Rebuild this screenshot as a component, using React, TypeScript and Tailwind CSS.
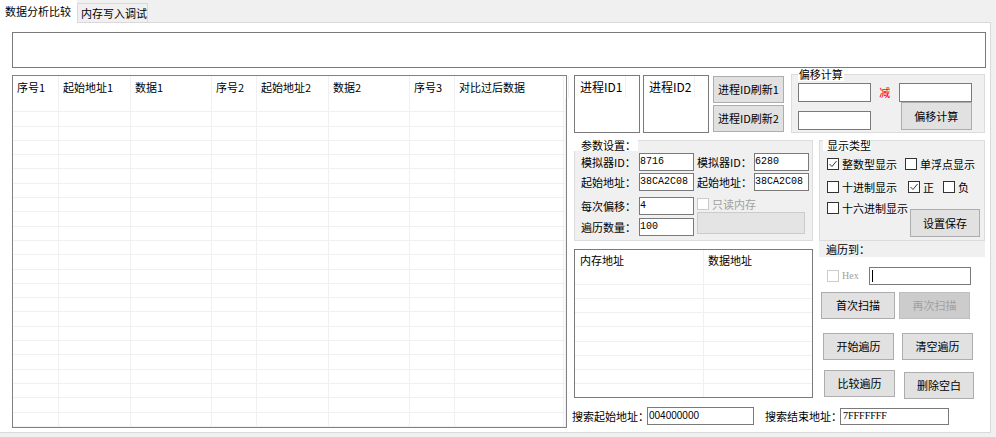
import React from "react";

const COLS = "grid grid-cols-[46px_72px_81px_45px_72px_81px_45px_109px_1fr]";
const HEADERS = ["序号1", "起始地址1", "数据1", "序号2", "起始地址2", "数据2", "序号3", "对比过后数据", ""];

function Btn({ label, className = "", disabled = false }: { label: string; className?: string; disabled?: boolean }) {
  return (
    <div
      className={`flex shrink-0 items-center justify-center border text-[11px] ${
        disabled ? "border-[#bfbfbf] bg-[#cccccc] text-[#a0a0a0]" : "border-[#adadad] bg-[#e1e1e1] text-black"
      } ${className}`}
    >
      {label}
    </div>
  );
}

function Check({ checked = false, disabled = false }: { checked?: boolean; disabled?: boolean }) {
  return (
    <span
      className={`flex h-[12px] w-[12px] shrink-0 items-center justify-center border bg-white ${
        disabled ? "border-[#cccccc]" : "border-[#333333]"
      }`}
    >
      {checked && (
        <svg width="10" height="10" viewBox="0 0 10 10">
          <path d="M1.5 5 L4 7.5 L8.5 2" fill="none" stroke="#333333" strokeWidth="1" />
        </svg>
      )}
    </span>
  );
}

function Field({ value = "", className = "" }: { value?: string; className?: string }) {
  return (
    <div className={`flex shrink-0 items-center overflow-hidden border border-[#7a7a7a] bg-white ${className}`}>{value}</div>
  );
}

function CheckItem({ label, checked = false, className = "" }: { label: string; checked?: boolean; className?: string }) {
  return (
    <div className={`flex h-[12px] items-center ${className}`}>
      <Check checked={checked} />
      <span className="ml-[3px] whitespace-nowrap">{label}</span>
    </div>
  );
}

// 进程ID 列表框
function IdBox({ title, className = "" }: { title: string; className?: string }) {
  return (
    <div className={`h-[58px] w-[66px] shrink-0 border border-[#7a7a7a] bg-white ${className}`}>
      <div className="flex h-[21px] w-[51px] items-center border-r border-[#f0f0f0] pl-[5px] text-[12px]">{title}</div>
    </div>
  );
}

const MONO = "font-['Liberation_Mono',monospace] text-[10px]";

export default function App() {
  return (
    <div className="h-[437px] w-[996px] overflow-hidden bg-[#f0f0f0] font-['Noto_Sans_CJK_SC',sans-serif] text-[11px] leading-none text-black">
      {/* 选项卡 */}
      <div className="flex h-[23px] items-end">
        <div className="flex h-[23px] w-[77px] items-center bg-white pl-[5px]">数据分析比较</div>
        <div className="flex h-[20px] w-[71px] items-center border border-[#d9d9d9] bg-[#f0f0f0] pl-[3px]">内存写入调试</div>
        <div className="h-[1px] w-[843px] bg-[#d9d9d9]" />
      </div>

      {/* 选项卡页面 */}
      <div className="h-[410px] w-[991px] border-r border-b border-[#d9d9d9] bg-white pl-[12px] pt-[9px]">
        <div className="h-[36px] w-[974px] border border-[#7a7a7a]" />

        <div className="flex">
          {/* 左侧比较列表 */}
          <div className="mt-[7px] h-[353px] w-[555px] shrink-0 border border-[#828282] bg-white">
            <div className={`${COLS} h-[22px]`}>
              {HEADERS.map((h, i) => (
                <div key={i} className="flex items-center border-r border-[#f0f0f0] pl-[4px]">
                  {h}
                </div>
              ))}
            </div>
            <div className="flex h-[329px] flex-col">
              {Array.from({ length: 23 }).map((_, r) => (
                <div key={r} className={`${COLS} flex-1 border-b border-[#f0f0f0]`}>
                  {HEADERS.map((_, c) => (
                    <div key={c} className="border-r border-[#f0f0f0]" />
                  ))}
                </div>
              ))}
            </div>
          </div>

          {/* 右侧面板 */}
          <div className="ml-[7px] flex w-[411px] flex-col">
            {/* 进程 + 偏移计算 */}
            <div className="flex h-[65px] items-start">
              <IdBox title="进程ID1" className="mt-[7px]" />
              <IdBox title="进程ID2" className="ml-[3px] mt-[7px]" />
              <div className="ml-[4px] mt-[8px] flex w-[71px] flex-col gap-[2px]">
                <Btn label="进程ID刷新1" className="h-[27px]" />
                <Btn label="进程ID刷新2" className="h-[27px]" />
              </div>
              <div className="relative ml-[7px] mt-[6px] flex h-[59px] w-[195px] border border-[#dcdcdc] bg-[#f0f0f0] pl-[6px] pt-[8px]">
                <span className="absolute -top-[7px] left-[6px] bg-white px-[1px] py-[1px]">偏移计算</span>
                <div className="flex flex-col gap-[9px]">
                  <Field className="h-[19px] w-[73px]" />
                  <Field className="h-[19px] w-[73px]" />
                </div>
                <div className="flex h-[19px] w-[28px] items-center justify-center text-[#ff0000]">减</div>
                <div className="flex flex-col">
                  <Field className="h-[19px] w-[73px]" />
                  <Btn label="偏移计算" className="ml-[2px] h-[28px] w-[71px]" />
                </div>
              </div>
            </div>

            {/* 参数设置 + 显示类型 */}
            <div className="mt-[7px] flex h-[101px]">
              <div className="relative h-[101px] w-[239px] shrink-0 border border-[#dcdcdc] bg-[#f0f0f0]">
                <span className="absolute -top-[2px] -left-[1px] flex h-[12px] w-[64px] items-center bg-white pl-[7px]">参数设置：</span>
                <div className="flex flex-col pl-[6px] pt-[12px]">
                  <div className="flex h-[18px] items-center">
                    <span className="w-[58px]">模拟器ID：</span>
                    <Field value="8716" className={`h-[18px] w-[55px] ${MONO}`} />
                    <span className="ml-[3px] w-[57px]">模拟器ID：</span>
                    <Field value="6280" className={`h-[18px] w-[55px] ${MONO}`} />
                  </div>
                  <div className="mt-[2px] flex h-[18px] items-center">
                    <span className="w-[58px]">起始地址：</span>
                    <Field value="38CA2C08" className={`h-[18px] w-[55px] ${MONO}`} />
                    <span className="ml-[3px] w-[57px]">起始地址：</span>
                    <Field value="38CA2C08" className={`h-[18px] w-[55px] ${MONO}`} />
                  </div>
                  <div className="mt-[6px] flex">
                    <div className="flex flex-col">
                      <div className="flex h-[18px] items-center">
                        <span className="w-[58px]">每次偏移：</span>
                        <Field value="4" className={`h-[18px] w-[55px] ${MONO}`} />
                      </div>
                      <div className="mt-[3px] flex h-[18px] items-center">
                        <span className="w-[58px]">遍历数量：</span>
                        <Field value="100" className={`h-[18px] w-[55px] ${MONO}`} />
                      </div>
                    </div>
                    <div className="ml-[3px] flex flex-col pt-[1px]">
                      <div className="flex h-[12px] items-center text-[#a0a0a0]">
                        <Check disabled />
                        <span className="ml-[3px]">只读内存</span>
                      </div>
                      <div className="mt-[2px] h-[22px] w-[108px] border border-[#cccccc] bg-[#e4e4e4]" />
                    </div>
                  </div>
                </div>
              </div>

              <div className="relative ml-[6px] h-[101px] w-[166px] shrink-0 border border-[#dcdcdc] bg-[#f0f0f0] pl-[7px] pt-[17px]">
                <span className="absolute -top-[2px] left-[3px] flex h-[12px] w-[48px] items-center bg-white pl-[4px]">显示类型</span>
                <div className="flex">
                  <CheckItem label="整数型显示" checked className="w-[78px]" />
                  <CheckItem label="单浮点显示" />
                </div>
                <div className="mt-[11px] flex">
                  <CheckItem label="十进制显示" className="w-[81px]" />
                  <CheckItem label="正" checked className="w-[35px]" />
                  <CheckItem label="负" />
                </div>
                <div className="mt-[9px] flex items-start">
                  <CheckItem label="十六进制显示" className="w-[83px]" />
                  <Btn label="设置保存" className="mt-[7px] h-[28px] w-[70px]" />
                </div>
              </div>
            </div>

            {/* 内存列表 + 扫描按钮 */}
            <div className="flex h-[158px]">
              <div className="mt-[8px] h-[149px] w-[239px] shrink-0 border border-[#7a7a7a] bg-white">
                <div className="grid h-[21px] grid-cols-[129px_1fr]">
                  <div className="flex items-center border-r border-[#f0f0f0] pl-[5px]">内存地址</div>
                  <div className="flex items-center pl-[4px]">数据地址</div>
                </div>
                <div className="flex h-[126px] flex-col">
                  {Array.from({ length: 9 }).map((_, r) => (
                    <div key={r} className="grid flex-1 grid-cols-[129px_1fr] border-b border-[#f0f0f0] last:border-b-0">
                      <div className="border-r border-[#f0f0f0]" />
                      <div />
                    </div>
                  ))}
                </div>
              </div>

              <div className="ml-[6px] flex w-[166px] flex-col">
                <div className="flex h-[16px] items-center bg-[#f0f0f0] pl-[7px]">遍历到：</div>
                <div className="mt-[10px] flex h-[18px] items-center pl-[8px]">
                  <Check disabled />
                  <span className="ml-[3px] w-[27px] font-['Liberation_Serif',serif] text-[10px] text-[#a0a0a0]">Hex</span>
                  <div className="flex h-[18px] w-[102px] items-center border border-[#7a7a7a] bg-white pl-[2px]">
                    <span className="h-[12px] w-[1px] bg-black" />
                  </div>
                </div>
                <div className="mt-[7px] flex">
                  <Btn label="首次扫描" className="ml-[2px] h-[27px] w-[74px]" />
                  <Btn label="再次扫描" disabled className="ml-[4px] h-[27px] w-[71px]" />
                </div>
                <div className="mt-[14px] flex">
                  <Btn label="开始遍历" className="ml-[4px] h-[27px] w-[71px]" />
                  <Btn label="清空遍历" className="ml-[8px] h-[27px] w-[71px]" />
                </div>
                <div className="mt-[10px] flex items-start">
                  <Btn label="比较遍历" className="ml-[5px] h-[27px] w-[71px]" />
                  <Btn label="删除空白" className="ml-[9px] mt-[2px] h-[27px] w-[70px]" />
                </div>
              </div>
            </div>

            {/* 搜索地址 */}
            <div className="-ml-[2px] mt-[8px] flex items-center">
              <span className="w-[75px] whitespace-nowrap">搜索起始地址：</span>
              <Field value="004000000" className="h-[18px] w-[107px] pl-[1px] font-['Liberation_Sans',sans-serif] text-[10px]" />
              <span className="ml-[11px] w-[75px] whitespace-nowrap">搜索结束地址：</span>
              <Field value="7FFFFFFF" className="h-[17px] w-[109px] pl-[2px] font-['Liberation_Serif',serif] text-[10px]" />
            </div>
          </div>
        </div>
      </div>
    </div>
  );
}
